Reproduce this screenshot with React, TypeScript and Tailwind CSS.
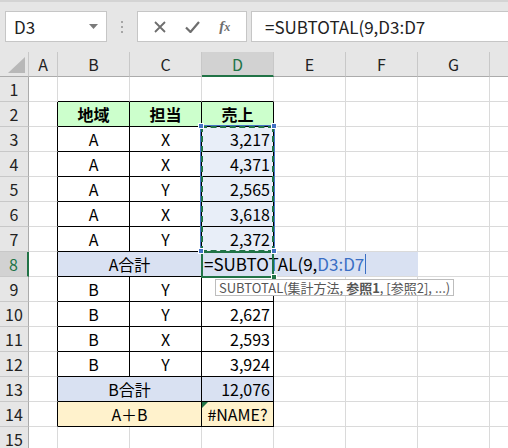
import React from "react";
import clsx from "clsx";

type Row = {
  n: number;
  B?: string;
  C?: string;
  D?: string;
  merged?: string;
  fill?: string;
  dFill?: string;
  bold?: boolean;
  dAlign?: "center" | "right";
};

const rows: Row[] = [
  { n: 1 },
  { n: 2, B: "地域", C: "担当", D: "売上", fill: "bg-[#ccffcc]", dFill: "bg-[#ccffcc]", bold: true, dAlign: "center" },
  { n: 3, B: "A", C: "X", D: "3,217", dFill: "bg-[#e8eef8]" },
  { n: 4, B: "A", C: "X", D: "4,371", dFill: "bg-[#e8eef8]" },
  { n: 5, B: "A", C: "Y", D: "2,565", dFill: "bg-[#e8eef8]" },
  { n: 6, B: "A", C: "X", D: "3,618", dFill: "bg-[#e8eef8]" },
  { n: 7, B: "A", C: "Y", D: "2,372", dFill: "bg-[#e8eef8]" },
  { n: 8, merged: "A合計", fill: "bg-[#d9e1f2]", dFill: "bg-[#d9e1f2]" },
  { n: 9, B: "B", C: "Y" },
  { n: 10, B: "B", C: "Y", D: "2,627" },
  { n: 11, B: "B", C: "X", D: "2,593" },
  { n: 12, B: "B", C: "Y", D: "3,924" },
  { n: 13, merged: "B合計", D: "12,076", fill: "bg-[#d9e1f2]", dFill: "bg-[#d9e1f2]" },
  { n: 14, merged: "A＋B", D: "#NAME?", fill: "bg-[#fff2cc]", dFill: "bg-[#fff2cc]", dAlign: "center" },
  { n: 15 },
];

function Cell({
  w,
  right,
  bottom,
  bg,
  align = "center",
  bold,
  children,
}: {
  w: string;
  right?: boolean;
  bottom?: boolean;
  bg?: string;
  align?: "center" | "right" | "left";
  bold?: boolean;
  children?: React.ReactNode;
}) {
  return (
    <div
      className={clsx(
        "h-full shrink-0 border-r border-b flex items-center px-[3px] whitespace-nowrap overflow-hidden",
        w,
        right ? "border-r-black" : "border-r-[#dadada]",
        bottom ? "border-b-black" : "border-b-[#dadada]",
        bg,
        align === "center" && "justify-center",
        align === "right" && "justify-end",
        bold && "font-bold"
      )}
    >
      {children}
    </div>
  );
}

export default function App() {
  const cols = ["A", "B", "C", "D", "E", "F", "G"];

  return (
    <div
      className="relative w-[508px] h-[448px] overflow-hidden bg-white text-[16px] text-black"
      style={{ fontFamily: '"Noto Sans CJK JP", "Liberation Sans", sans-serif' }}
    >
      {/* formula bar */}
      <div className="h-[52px] bg-[#e6e6e6] border-t-2 border-t-[#d4d4d4] flex items-start pt-[9px]">
        <div className="ml-[5px] w-[102px] h-[31px] bg-white border border-[#c6c6c6] flex items-center pl-[8px] pr-[8px] text-[17px] text-[#222]">
          <span className="flex-1">D3</span>
          <svg width="9" height="5" viewBox="0 0 9 5">
            <path d="M0 0 L9 0 L4.5 5 Z" fill="#7a7a7a" />
          </svg>
        </div>
        <div className="w-[30px] h-[31px] flex flex-col items-center justify-center gap-[3px]">
          <span className="w-[2px] h-[2px] bg-[#a6a6a6]" />
          <span className="w-[2px] h-[2px] bg-[#a6a6a6]" />
          <span className="w-[2px] h-[2px] bg-[#a6a6a6]" />
        </div>
        <div className="w-[110px] h-[31px] bg-white border border-[#c6c6c6] flex items-center justify-around px-[6px]">
          <svg width="12" height="12" viewBox="0 0 12 12">
            <path d="M1 1 L11 11 M11 1 L1 11" stroke="#6e6e6e" strokeWidth="1.8" />
          </svg>
          <svg width="15" height="12" viewBox="0 0 15 12">
            <path d="M1 6.5 L5.5 11 L14 1" stroke="#6e6e6e" strokeWidth="2.2" fill="none" />
          </svg>
          <span
            className="text-[15px] italic text-[#6e6e6e] font-bold"
            style={{ fontFamily: '"Liberation Serif", serif' }}
          >
            f<span className="text-[12px]">x</span>
          </span>
        </div>
        <div className="ml-[4px] flex-1 h-[31px] bg-white border border-r-0 border-[#c6c6c6] flex items-center pl-[13px] text-[17px] text-[#222]">
          =SUBTOTAL(9,D3:D7
        </div>
      </div>

      {/* column headers */}
      <div className="flex h-[25px] bg-[#e6e6e6]">
        <div className="w-[29px] shrink-0 h-full border-r border-b border-r-[#c8c8c8] border-b-[#ababab] relative">
          <svg className="absolute left-[8px] top-[5px]" width="17" height="16" viewBox="0 0 17 16">
            <path d="M17 0 L17 16 L0 16 Z" fill="#b8b8b8" />
          </svg>
        </div>
        {cols.map((c) => (
          <div
            key={c}
            className={clsx(
              "shrink-0 h-full border-r border-r-[#c8c8c8] flex items-center justify-center",
              c === "A" ? "w-[29px]" : "w-[72px]",
              c === "D"
                ? "bg-[#d2d2d2] border-b-2 border-b-[#217346] text-[#217346]"
                : "border-b border-b-[#ababab] text-[#222]"
            )}
          >
            {c}
          </div>
        ))}
        <div className="flex-1 h-full border-b border-b-[#ababab]" />
      </div>

      {/* rows */}
      {rows.map((r) => {
        const inTable = r.n >= 2 && r.n <= 14;
        const dark = inTable;
        const darkBottom = r.n >= 1 && r.n <= 14;
        return (
          <div key={r.n} className="flex h-[25px]">
            <div
              className={clsx(
                "w-[29px] shrink-0 h-full border-b border-b-[#c8c8c8] flex items-center justify-center",
                r.n === 8
                  ? "bg-[#d2d2d2] border-r-2 border-r-[#217346] text-[#217346]"
                  : "bg-[#e6e6e6] border-r border-r-[#ababab] text-[#222]"
              )}
            >
              {r.n}
            </div>
            <Cell w="w-[29px]" right={dark} />
            {r.merged ? (
              <Cell w="w-[144px]" right={dark} bottom={darkBottom} bg={r.fill}>
                {r.merged}
              </Cell>
            ) : (
              <>
                <Cell w="w-[72px]" right={dark} bottom={darkBottom} bg={r.fill} bold={r.bold}>
                  {r.B}
                </Cell>
                <Cell w="w-[72px]" right={dark} bottom={darkBottom} bg={r.fill} bold={r.bold}>
                  {r.C}
                </Cell>
              </>
            )}
            <Cell
              w="w-[72px]"
              right={dark}
              bottom={darkBottom}
              bg={r.dFill}
              bold={r.bold}
              align={r.dAlign ?? "right"}
            >
              {r.D}
            </Cell>
            <Cell w="w-[72px]" />
            <Cell w="w-[72px]" />
            <Cell w="w-[72px]" />
            <div className="flex-1 h-full border-b border-b-[#dadada]" />
          </div>
        );
      })}

      {/* error indicator on D14 */}
      <div className="absolute left-[202px] top-[402px] w-0 h-0 border-t-[6px] border-t-[#217346] border-r-[6px] border-r-transparent" />

      {/* referenced range D3:D7 */}
      <div className="absolute left-[200px] top-[125px] w-[75px] h-[128px] border border-[#4472c4]" />
      <div className="absolute left-[201px] top-[126px] w-[73px] h-[126px] border-2 border-dashed border-[#217346]" />

      {/* in-cell editor D8 */}
      <div className="absolute left-[202px] top-[252px] w-[216px] h-[24px] bg-[#d9e1f2] flex items-center pl-[2px] text-[17px] whitespace-nowrap">
        <span>=SUBTOTAL(9,</span>
        <span className="text-[#3a6fc4]">D3:D7</span>
        <span className="ml-[1px] w-[1px] h-[20px] bg-[#3a6fc4]" />
      </div>
      <div className="absolute left-[201px] top-[251px] w-[73px] h-[27px] border-2 border-[#217346]" />

      {/* range handles */}
      <div className="absolute left-[198px] top-[123px] w-[6px] h-[6px] bg-[#4472c4] border border-white" />
      <div className="absolute left-[271px] top-[123px] w-[6px] h-[6px] bg-[#4472c4] border border-white" />
      <div className="absolute left-[198px] top-[248px] w-[6px] h-[6px] bg-[#4472c4] border border-white" />
      <div className="absolute left-[271px] top-[248px] w-[6px] h-[6px] bg-[#4472c4] border border-white" />
      <div className="absolute left-[271px] top-[274px] w-[6px] h-[6px] bg-[#217346] border border-white" />

      {/* function tooltip */}
      <div className="absolute left-[215px] top-[279px] h-[17px] px-[3px] bg-white border border-[#bdbdbd] flex items-center text-[13px] text-[#555] whitespace-nowrap">
        SUBTOTAL(集計方法, <span className="font-bold">&nbsp;参照1</span>, [参照2], ...)
      </div>
    </div>
  );
}
